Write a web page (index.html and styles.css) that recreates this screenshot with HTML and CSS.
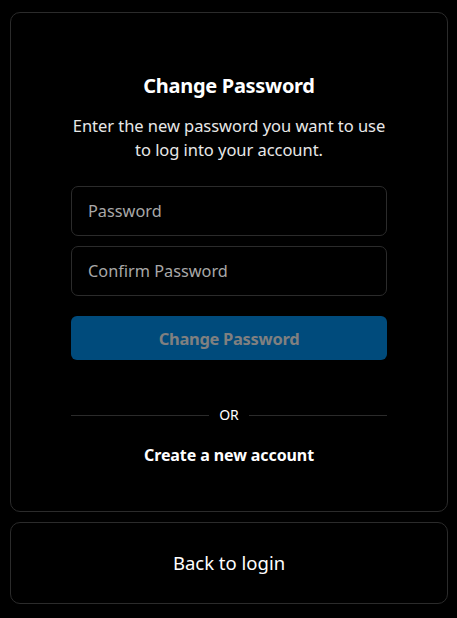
FILE: index.html
```html
<!DOCTYPE html>
<html lang="en">
<head>
<meta charset="utf-8">
<title>Change Password</title>
<link rel="stylesheet" href="styles.css">
</head>
<body>
<main class="page">
  <section class="card main-card">
    <h1 class="title">Change Password</h1>
    <p class="subtitle">Enter the new password you want to use<br>to log into your account.</p>
    <form class="form">
      <input class="field" type="password" placeholder="Password">
      <input class="field" type="password" placeholder="Confirm Password">
      <button class="submit" type="button" disabled>Change Password</button>
    </form>
    <div class="divider"><span class="line"></span><span class="or">OR</span><span class="line"></span></div>
    <a class="create" href="#">Create a new account</a>
  </section>
  <section class="card back-card">
    <a class="back" href="#">Back to login</a>
  </section>
</main>
</body>
</html>
```
FILE: styles.css
```css
* { box-sizing: border-box; }
html, body { background: #000; }
body {
  margin: 0;
  padding: 12px 9px 12px 10px;
  font-family: "Noto Sans", "Open Sans", sans-serif;
  color: #fff;
}
.page { display: flex; flex-direction: column; gap: 10px; }
.card {
  border: 1px solid #2b2b2b;
  border-radius: 10px;
  background: #000;
}
.main-card {
  height: 500px;
  padding: 59px 60px 0;
  display: flex;
  flex-direction: column;
  align-items: stretch;
}
.title {
  margin: 0;
  font-size: 20px;
  line-height: 28px;
  font-weight: 700;
  text-align: center;
  letter-spacing: -0.3px;
}
.subtitle {
  margin: 14px 0 0;
  font-size: 16.5px;
  line-height: 24px;
  text-align: center;
  color: #e8e8e8;
  letter-spacing: -0.05px;
}
.form {
  margin-top: 24px;
  display: flex;
  flex-direction: column;
  gap: 10px;
}
.field {
  height: 50px;
  background: #000;
  border: 1px solid #2b2b2b;
  border-radius: 7px;
  padding: 0 16px;
  font-family: inherit;
  font-size: 16.3px;
  color: #fff;
  outline: none;
  letter-spacing: 0;
}
.field::placeholder { color: #a8a8a8; }
.submit {
  margin-top: 10px;
  height: 44px;
  border: 0;
  border-radius: 6px;
  background: #004b7c;
  color: #808080;
  font-family: inherit;
  font-size: 16.5px;
  font-weight: 700;
  letter-spacing: -0.3px;
}
.divider {
  margin-top: 45px;
  height: 20px;
  display: flex;
  align-items: center;
  gap: 10px;
}
.line { flex: 1; height: 1px; background: #2b2b2b; }
.or { font-size: 14px; line-height: 20px; color: #fff; }
.create {
  margin-top: 18px;
  font-size: 16px;
  line-height: 24px;
  font-weight: 700;
  color: #fff;
  text-decoration: none;
  text-align: center;
  letter-spacing: -0.1px;
}
.back-card {
  height: 82px;
  display: flex;
  align-items: center;
  justify-content: center;
}
.back {
  font-size: 18.5px;
  line-height: 24px;
  color: #fff;
  text-decoration: none;
  letter-spacing: 0;
}
```
